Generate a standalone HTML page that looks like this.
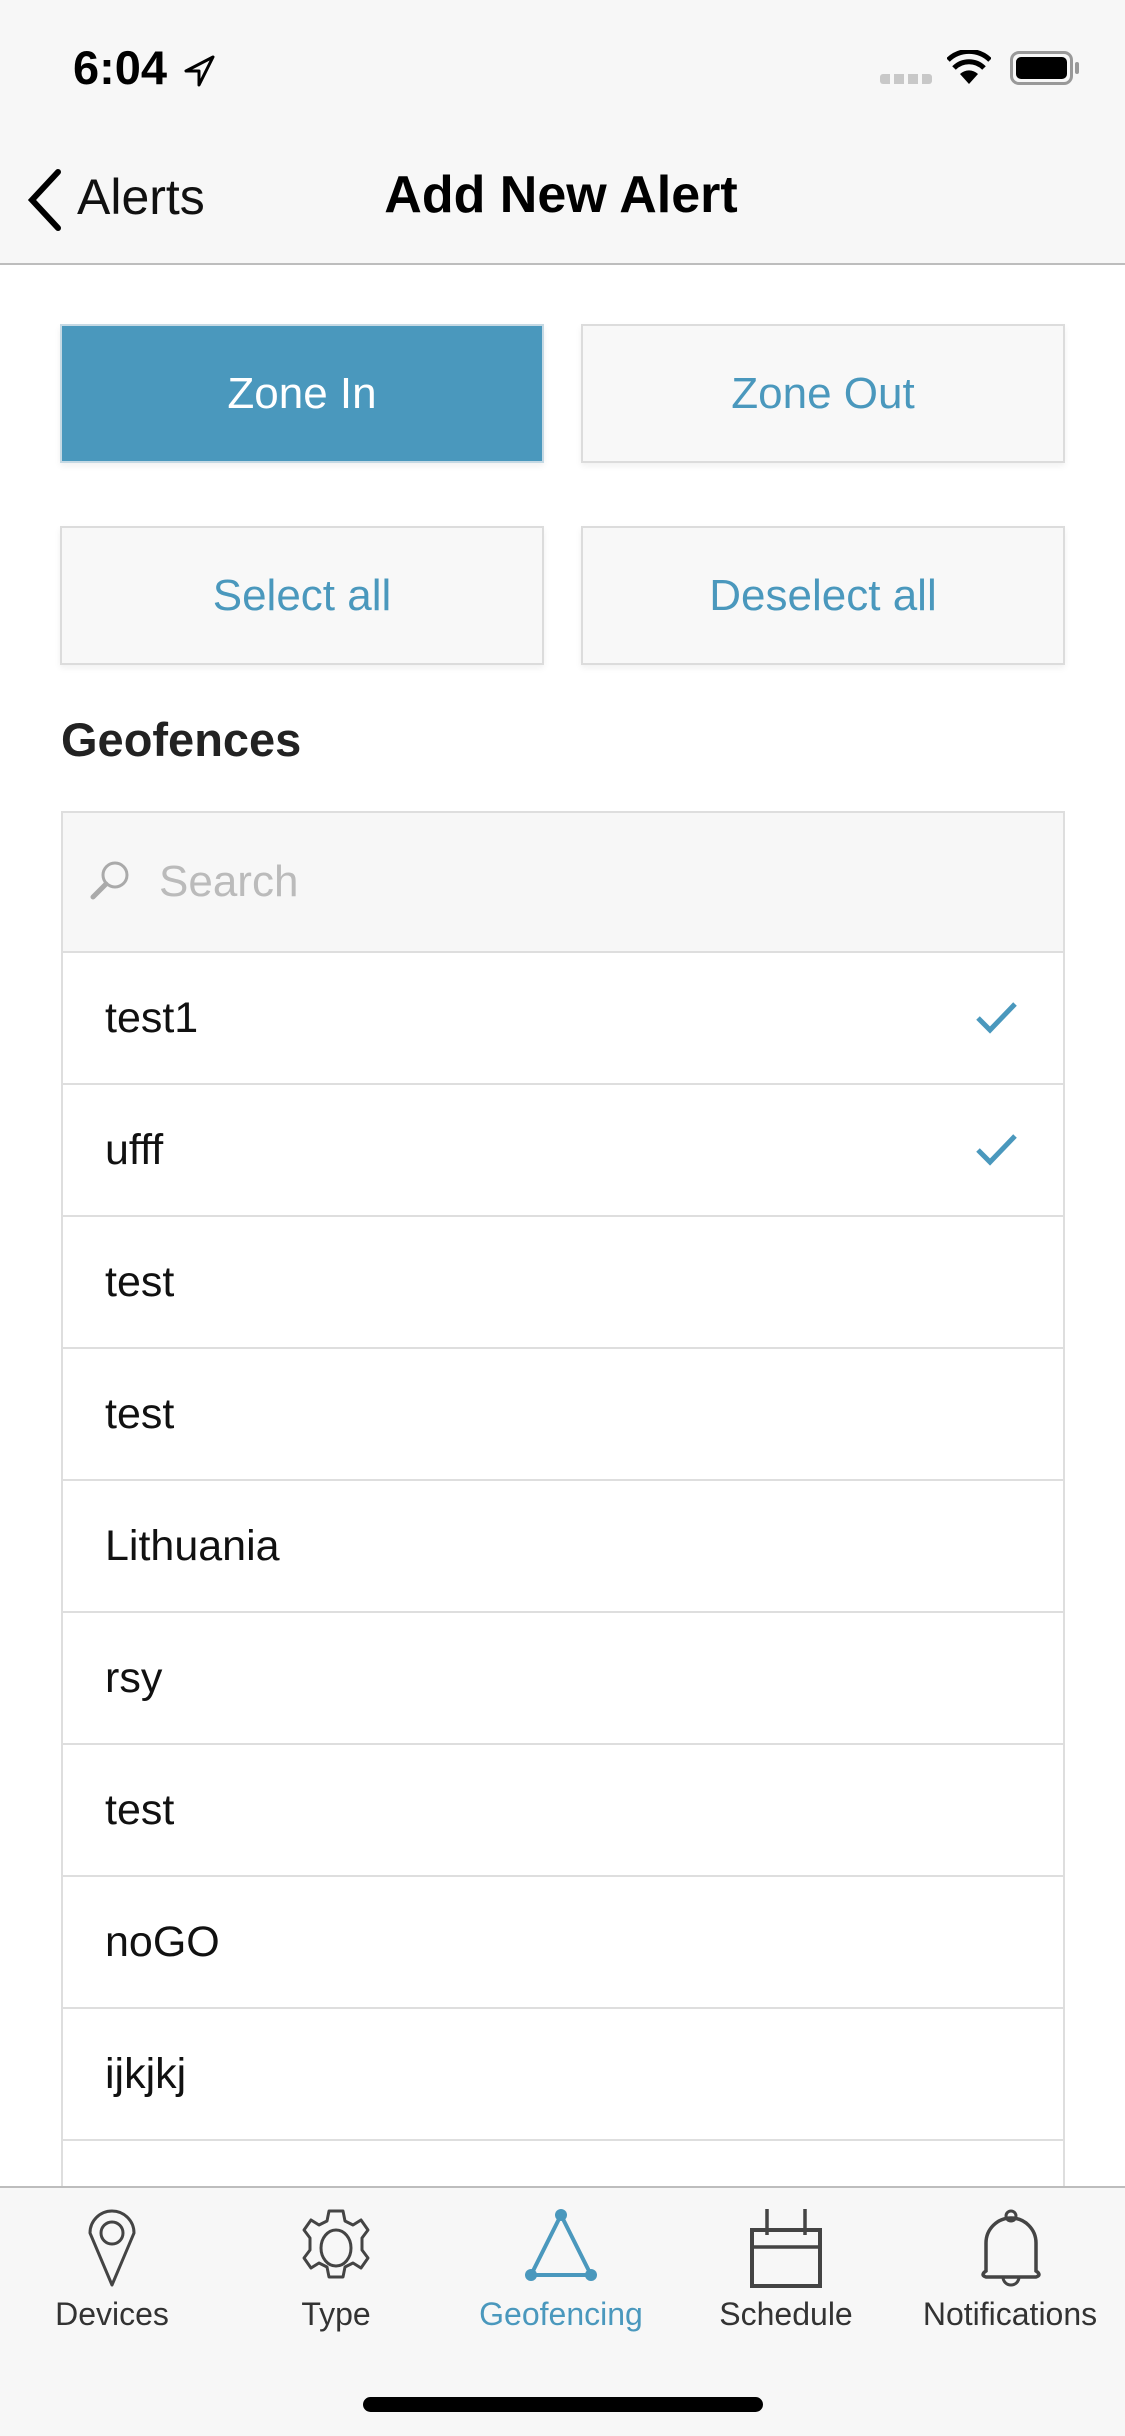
<!DOCTYPE html>
<html><head><meta charset="utf-8"><style>
*{margin:0;padding:0;box-sizing:border-box}
body{width:1125px;height:2436px;background:#fff;font-family:"Liberation Sans",sans-serif;position:relative;overflow:hidden}
.abs{position:absolute}
.btn{position:absolute;height:139px;width:484px;background:#f8f8f8;border:2px solid #dcdcdc;color:#4a98bd;font-size:44px;display:flex;align-items:center;justify-content:center;box-shadow:0 3px 6px rgba(0,0,0,0.06)}
.row{position:absolute;left:61px;width:1004px;height:132px;border-bottom:2px solid #dedede;font-size:43px;color:#111;padding-left:44px;display:flex;align-items:center}
.tab{position:absolute;top:2296px;font-size:32px;color:#333;text-align:center;width:220px}
</style></head><body>
<div class="abs" style="left:0;top:0;width:1125px;height:265px;background:#f7f7f7;border-bottom:2px solid #bdbdbd"></div>
<div class="abs" style="left:73px;top:40px;font-size:47px;font-weight:bold">6:04</div>
<svg class="abs" style="left:182px;top:54px" width="34" height="34" viewBox="0 0 34 34"><path d="M31 3 L4 17 L17 17 L17 31 Z" fill="none" stroke="#000" stroke-width="3" stroke-linejoin="round"/></svg>
<div class="abs" style="left:880px;top:74px;width:52px;height:10px;background:repeating-linear-gradient(90deg,#c8c8c8 0 10px,transparent 10px 14px);border-radius:3px"></div>
<svg class="abs" style="left:947px;top:50px" width="44" height="36" viewBox="0 0 44 36"><path d="M22 34 L13 24 A13 13 0 0 1 31 24 Z" fill="#000"/><path d="M7 18 A21 21 0 0 1 37 18" stroke="#000" stroke-width="5" fill="none"/><path d="M1 10 A30 30 0 0 1 43 10" stroke="#000" stroke-width="5" fill="none"/></svg>
<div class="abs" style="left:1010px;top:51px;width:63px;height:34px;border:3px solid #999;border-radius:9px;padding:3px"><div style="width:100%;height:100%;background:#000;border-radius:5px"></div></div>
<div class="abs" style="left:1075px;top:62px;width:4px;height:12px;background:#999;border-radius:2px"></div>
<svg class="abs" style="left:24px;top:168px" width="40" height="64" viewBox="0 0 40 64"><path d="M34 4 L8 32 L34 60" stroke="#000" stroke-width="6" fill="none" stroke-linecap="round"/></svg>
<div class="abs" style="left:77px;top:168px;font-size:50px;color:#111">Alerts</div>
<div class="abs" style="left:0;width:1125px;top:165px;text-align:center;font-size:52px;font-weight:bold;color:#000;padding-right:3px">Add New Alert</div>

<div class="btn" style="left:60px;top:324px;background:#4a98bd;color:#fff;border-color:#c5d9e4">Zone In</div>
<div class="btn" style="left:581px;top:324px">Zone Out</div>
<div class="btn" style="left:60px;top:526px">Select all</div>
<div class="btn" style="left:581px;top:526px">Deselect all</div>
<div class="abs" style="left:61px;top:712px;font-size:47px;font-weight:bold;color:#222">Geofences</div>

<div class="abs" style="left:61px;top:811px;width:1004px;height:1400px;border:2px solid #dedede"></div>
<div class="row" style="top:811px;height:142px;background:#f7f7f7;border:2px solid #dedede;color:#bbb;padding-left:96px;font-size:44px">Search</div>
<svg class="abs" style="left:88px;top:858px" width="44" height="44" viewBox="0 0 44 44"><circle cx="27" cy="17" r="12" fill="none" stroke="#aaa" stroke-width="3"/><path d="M18 26 L5 39" stroke="#aaa" stroke-width="5" stroke-linecap="round"/></svg>
<div class="row" style="top:953px">test1</div>
<div class="row" style="top:1085px">ufff</div>
<div class="row" style="top:1217px">test</div>
<div class="row" style="top:1349px">test</div>
<div class="row" style="top:1481px">Lithuania</div>
<div class="row" style="top:1613px">rsy</div>
<div class="row" style="top:1745px">test</div>
<div class="row" style="top:1877px">noGO</div>
<div class="row" style="top:2009px">ijkjkj</div>
<svg class="abs" style="left:975px;top:1000px" width="44" height="36" viewBox="0 0 44 36"><path d="M3 18 L15 30 L40 4" stroke="#4a98bd" stroke-width="5" fill="none"/></svg>
<svg class="abs" style="left:975px;top:1132px" width="44" height="36" viewBox="0 0 44 36"><path d="M3 18 L15 30 L40 4" stroke="#4a98bd" stroke-width="5" fill="none"/></svg>

<div class="abs" style="left:0;top:2186px;width:1125px;height:250px;background:#f7f7f7;border-top:2px solid #bdbdbd"></div>
<svg class="abs" style="left:84px;top:2205px" width="56" height="84" viewBox="0 0 56 84"><path d="M28 80 L6 28 A22 22 0 1 1 50 28 Z" fill="none" stroke="#444" stroke-width="3" stroke-linejoin="round"/><circle cx="28" cy="28" r="11" fill="none" stroke="#444" stroke-width="3"/></svg>
<svg class="abs" style="left:298px;top:2208px" width="76" height="80" viewBox="0 0 76 80"><path d="M31 3 h14 l2 10 l8 4 l8 -5 l7 10 l-6 8 v12 l6 8 l-7 10 l-8 -5 l-8 4 l-2 10 h-14 l-2 -10 l-8 -4 l-8 5 l-7 -10 l6 -8 v-12 l-6 -8 l7 -10 l8 5 l8 -4 Z" fill="none" stroke="#444" stroke-width="3" stroke-linejoin="round"/><ellipse cx="38" cy="40" rx="15" ry="18" fill="none" stroke="#444" stroke-width="3"/></svg>
<svg class="abs" style="left:521px;top:2205px" width="80" height="84" viewBox="0 0 80 84"><path d="M40 10 L10 70 L70 70 Z" fill="none" stroke="#4a98bd" stroke-width="4" stroke-linejoin="round"/><circle cx="40" cy="10" r="6" fill="#4a98bd"/><circle cx="10" cy="70" r="6" fill="#4a98bd"/><circle cx="70" cy="70" r="6" fill="#4a98bd"/></svg>
<svg class="abs" style="left:750px;top:2205px" width="72" height="84" viewBox="0 0 72 84"><rect x="2" y="25" width="68" height="56" fill="none" stroke="#444" stroke-width="4"/><path d="M2 42 H70 M17 4 V30 M55 4 V30" stroke="#444" stroke-width="3.5"/></svg>
<svg class="abs" style="left:978px;top:2205px" width="66" height="84" viewBox="0 0 66 84"><path d="M8 66 V38 A25 25 0 0 1 58 38 V66 Q64 70 58 72 H8 Q2 70 8 66 Z" fill="none" stroke="#444" stroke-width="3.5"/><circle cx="33" cy="11" r="5" fill="none" stroke="#444" stroke-width="3"/><path d="M25 72 A8 8 0 0 0 41 72" fill="none" stroke="#444" stroke-width="3"/></svg>
<div class="tab" style="left:2px">Devices</div>
<div class="tab" style="left:226px">Type</div>
<div class="tab" style="left:451px;color:#4a98bd">Geofencing</div>
<div class="tab" style="left:676px">Schedule</div>
<div class="tab" style="left:900px">Notifications</div>
<div class="abs" style="left:363px;top:2397px;width:400px;height:15px;background:#000;border-radius:8px"></div>
</body></html>
